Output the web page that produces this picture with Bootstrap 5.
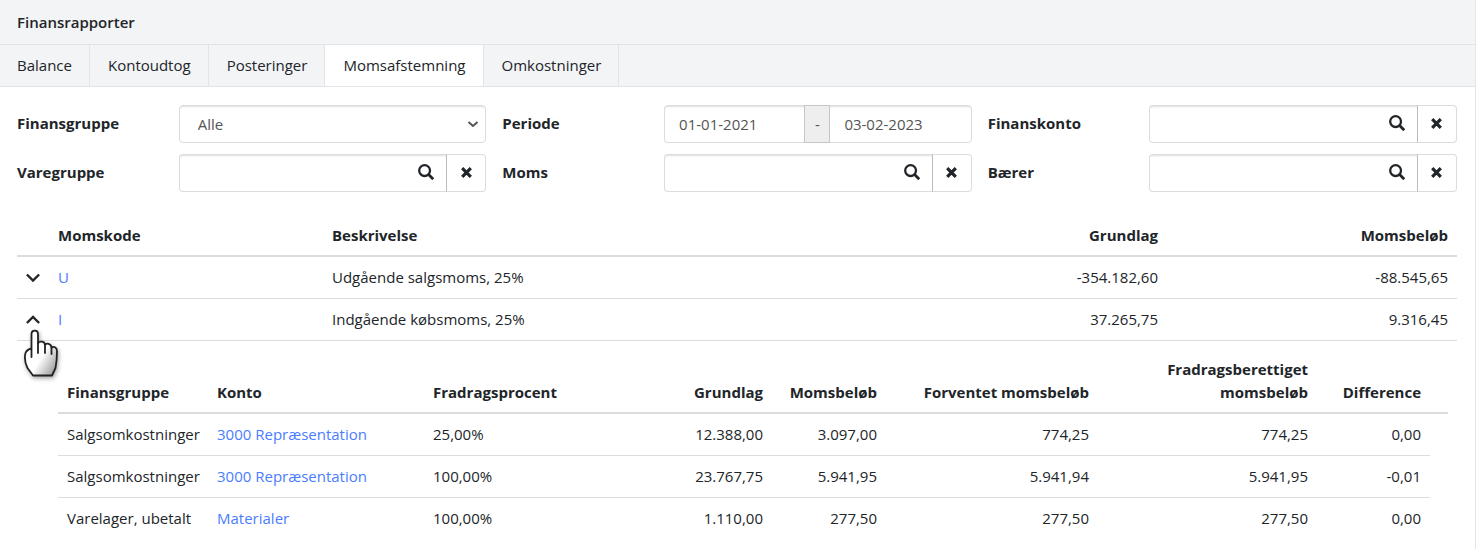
<!DOCTYPE html>
<html lang="da">
<head>
<meta charset="utf-8">
<meta name="viewport" content="width=device-width, initial-scale=1">
<title>Finansrapporter</title>
<link href="https://cdn.jsdelivr.net/npm/bootstrap@5.3.0/dist/css/bootstrap.min.css" rel="stylesheet">
<style>
  :root { --line: #dcdcdf; --bar: #f3f4f6; --bar-line: #e3e4e9; --ink: #212529; --muted: #555; --accent: #4a7dff; }
  body { font-family: "Open Sans", "Noto Sans", sans-serif; font-size: 15px; line-height: 23px; color: var(--ink); }
  .report { border-right: 1px solid var(--bar-line); margin-right: 1px; min-height: 100vh; }
  .report-head { background: var(--bar); border-bottom: 1px solid var(--bar-line); padding: 11px 17px; }
  .report-head h1 { font-size: 15px; line-height: 22px; font-weight: 600; }
  .report-tabs { background: var(--bar); border-bottom: 1px solid var(--bar-line); }
  .report-tabs .nav-link { color: var(--ink); padding: 9px 17px 9px 18px; border-right: 1px solid var(--bar-line); }
  .report-tabs .nav-item:first-child .nav-link { padding-left: 17px; }
  .report-tabs .nav-link.active { background: #fff; }
  .report-body { padding: 18px 18px 0 17px; }
  .filters { margin-bottom: 23px; }
  .filters > .row { row-gap: 11px; }
  .filters .col-form-label { font-weight: 700; padding-top: 7px; padding-bottom: 7px; }
  .filters .form-control, .filters .form-select, .filters .btn, .filters .input-group-text {
    font-size: 15px; line-height: 24px; height: 38px; border-color: var(--line); border-radius: 4px; color: var(--muted); }
  .filters .form-control, .filters .form-select, .filters .btn-find { box-shadow: inset 0 3px 2px -2px rgba(0,0,0,.13); }
  .filters .form-control { padding-left: 14px; }
  .filters .form-select { padding-left: 18px; background-size: 14px 14px; background-position: right 5px center;
    background-image: url("data:image/svg+xml,%3csvg xmlns='http://www.w3.org/2000/svg' viewBox='0 0 14 14'%3e%3cpath d='M2.5 5l4.5 4 4.5-4' fill='none' stroke='%23555' stroke-width='2'/%3e%3c/svg%3e"); }
  .filters .btn { background-color: #fff; color: var(--ink); display: flex; align-items: center; justify-content: center; padding: 0; width: 40px; }
  .filters .input-group > :not(:last-child) { border-top-right-radius: 0; border-bottom-right-radius: 0; }
  .filters .input-group > :not(:first-child) { border-top-left-radius: 0; border-bottom-left-radius: 0; }
  .filters .btn-find { border-left: 0; border-right: 0; padding: 0 2px 2px 0; }
  .filters .btn-wipe { border-left-color: #bbb; padding-bottom: 2px; }
  .filters .input-group-text { background: #eee; border-color: #c6c6c8; padding: 0; width: 26px; justify-content: center; position: relative; z-index: 2; }
  .filters .period-from { border-right: 0; }
  .grid-table { table-layout: fixed; margin: 0; --bs-table-color: var(--ink); color: var(--ink); border-color: var(--line); }
  .grid-table > thead > tr > th { border-bottom: 2px solid var(--line); padding: 9px 9px 8px; vertical-align: bottom; font-weight: 700; }
  .grid-table > tbody > tr > td { padding: 9px; }
  .grid-table a { color: var(--accent); text-decoration: none; }
  .outer > tbody > tr > td.detail { padding: 8px 9px 0; border-bottom: 0; }
  .inner > tbody > tr:last-child > td { border-bottom: 0; }
  .c-toggle { width: 32px; } .c-code { width: 274px; } .c-amount { width: 290px; }
  .c-group { width: 150px; } .c-account { width: 216px; } .c-vat { width: 114px; }
  .c-expected { width: 212px; } .c-deduct { width: 219px; } .c-diff { width: 113px; } .c-end { width: 18px; }
  .toggle { display: block; border: 0; background: none; padding: 0; color: var(--ink); line-height: 16px; }
  .toggle svg, .filters svg { display: block; }
  .pointer { position: absolute; left: 3px; top: 28px; z-index: 2; pointer-events: none; filter: drop-shadow(1px 2px 2px rgba(0,0,0,.35)); }
</style>
</head>
<body>
<svg width="0" height="0" class="position-absolute" aria-hidden="true">
  <symbol id="i-find" viewBox="0 0 16 16"><circle cx="6.600" cy="6.600" r="5.400" fill="none" stroke="currentColor" stroke-width="2.300"/><path d="M10.600 10.600L15.200 15.200" stroke="currentColor" stroke-width="2.800" fill="none"/></symbol>
  <symbol id="i-wipe" viewBox="0 0 11 16"><path d="M1.200 4.200L9.800 12.800M9.800 4.200L1.200 12.800" stroke="currentColor" stroke-width="3.200" fill="none"/></symbol>
  <symbol id="i-down" viewBox="0 0 14 16"><path d="M.9 4.500L7 10.500L13.100 4.500" stroke="currentColor" stroke-width="2.400" fill="none"/></symbol>
  <symbol id="i-up" viewBox="0 0 14 16"><path d="M.9 11L7 5L13.100 11" stroke="currentColor" stroke-width="2.400" fill="none"/></symbol>
</svg>
<main class="report">
  <header class="report-head"><h1 class="m-0">Finansrapporter</h1></header>
  <nav class="report-tabs" aria-label="Rapporter">
    <ul class="nav">
      <li class="nav-item"><a class="nav-link" href="#">Balance</a></li>
      <li class="nav-item"><a class="nav-link" href="#">Kontoudtog</a></li>
      <li class="nav-item"><a class="nav-link" href="#">Posteringer</a></li>
      <li class="nav-item"><a class="nav-link active" aria-current="page" href="#">Momsafstemning</a></li>
      <li class="nav-item"><a class="nav-link" href="#">Omkostninger</a></li>
    </ul>
  </nav>
  <div class="report-body">
    <form class="filters">
      <div class="row gx-3">
        <div class="col-4"><div class="row gx-3">
          <label class="col-4 col-form-label" for="f-group">Finansgruppe</label>
          <div class="col-8"><select class="form-select" id="f-group"><option>Alle</option></select></div>
        </div></div>
        <div class="col-4"><div class="row gx-3">
          <label class="col-4 col-form-label" for="f-from">Periode</label>
          <div class="col-8"><div class="input-group flex-nowrap">
            <input class="form-control period-from" id="f-from" type="text" value="01-01-2021">
            <span class="input-group-text">-</span>
            <input class="form-control" type="text" value="03-02-2023" aria-label="Periode til">
          </div></div>
        </div></div>
        <div class="col-4"><div class="row gx-3">
          <label class="col-4 col-form-label" for="f-account">Finanskonto</label>
          <div class="col-8"><div class="input-group flex-nowrap">
            <input class="form-control border-end-0" id="f-account" type="text">
            <button class="btn btn-find" type="button" aria-label="Søg"><svg width="16" height="16"><use href="#i-find"/></svg></button>
            <button class="btn btn-wipe" type="button" aria-label="Ryd"><svg width="11" height="16"><use href="#i-wipe"/></svg></button>
          </div></div>
        </div></div>
        <div class="col-4"><div class="row gx-3">
          <label class="col-4 col-form-label" for="f-item">Varegruppe</label>
          <div class="col-8"><div class="input-group flex-nowrap">
            <input class="form-control border-end-0" id="f-item" type="text">
            <button class="btn btn-find" type="button" aria-label="Søg"><svg width="16" height="16"><use href="#i-find"/></svg></button>
            <button class="btn btn-wipe" type="button" aria-label="Ryd"><svg width="11" height="16"><use href="#i-wipe"/></svg></button>
          </div></div>
        </div></div>
        <div class="col-4"><div class="row gx-3">
          <label class="col-4 col-form-label" for="f-vat">Moms</label>
          <div class="col-8"><div class="input-group flex-nowrap">
            <input class="form-control border-end-0" id="f-vat" type="text">
            <button class="btn btn-find" type="button" aria-label="Søg"><svg width="16" height="16"><use href="#i-find"/></svg></button>
            <button class="btn btn-wipe" type="button" aria-label="Ryd"><svg width="11" height="16"><use href="#i-wipe"/></svg></button>
          </div></div>
        </div></div>
        <div class="col-4"><div class="row gx-3">
          <label class="col-4 col-form-label" for="f-carrier">Bærer</label>
          <div class="col-8"><div class="input-group flex-nowrap">
            <input class="form-control border-end-0" id="f-carrier" type="text">
            <button class="btn btn-find" type="button" aria-label="Søg"><svg width="16" height="16"><use href="#i-find"/></svg></button>
            <button class="btn btn-wipe" type="button" aria-label="Ryd"><svg width="11" height="16"><use href="#i-wipe"/></svg></button>
          </div></div>
        </div></div>
      </div>
    </form>
    <table class="table grid-table outer">
      <colgroup><col class="c-toggle"><col class="c-code"><col><col><col class="c-amount"></colgroup>
      <thead><tr><th></th><th scope="col">Momskode</th><th scope="col">Beskrivelse</th><th scope="col" class="text-end">Grundlag</th><th scope="col" class="text-end">Momsbeløb</th></tr></thead>
      <tbody>
        <tr>
          <td class="align-middle"><button class="toggle" type="button" aria-label="Vis detaljer"><svg width="14" height="16"><use href="#i-down"/></svg></button></td>
          <td><a href="#">U</a></td><td>Udgående salgsmoms, 25%</td><td class="text-end">-354.182,60</td><td class="text-end">-88.545,65</td>
        </tr>
        <tr>
          <td class="align-middle position-relative"><button class="toggle" type="button" aria-label="Skjul detaljer" aria-expanded="true"><svg width="14" height="16"><use href="#i-up"/></svg></button>
            <svg class="pointer" width="40" height="54" viewBox="0 0 40 54" aria-hidden="true">
              <defs><linearGradient id="skin" x1="0.2" y1="0.3" x2="1" y2="1"><stop offset=".4" stop-color="#fff"/><stop offset="1" stop-color="#888"/></linearGradient></defs>
              <path d="M11.500 30V7c0-4.500 6.500-4.500 6.500 0v9.500c1-3 7-2.500 7 1.500 1.500-2.500 6-1.500 6.500 2.500 2-1.500 5.500-.5 5.500 3.500 0 7-.5 12-1.500 17L32 48.500H13L7.500 41C5 36 4.500 30 5.500 26c1-2.500 3.500-4 6-4.500" fill="url(#skin)" stroke="#222" stroke-width="1.800" stroke-linejoin="round" stroke-linecap="round"/>
              <path d="M18 16v10M25 18v8M31.500 20.500V27" fill="none" stroke="#222" stroke-width="1.800" stroke-linecap="round"/>
            </svg></td>
          <td><a href="#">I</a></td><td>Indgående købsmoms, 25%</td><td class="text-end">37.265,75</td><td class="text-end">9.316,45</td>
        </tr>
        <tr>
          <td class="border-0 p-0"></td>
          <td class="detail" colspan="4">
            <table class="table grid-table inner">
              <colgroup><col class="c-group"><col class="c-account"><col><col><col class="c-vat"><col class="c-expected"><col class="c-deduct"><col class="c-diff"><col class="c-end"></colgroup>
              <thead><tr><th scope="col">Finansgruppe</th><th scope="col">Konto</th><th scope="col">Fradragsprocent</th><th scope="col" class="text-end">Grundlag</th><th scope="col" class="text-end">Momsbeløb</th><th scope="col" class="text-end">Forventet momsbeløb</th><th scope="col" class="text-end">Fradragsberettiget momsbeløb</th><th scope="col" class="text-end">Difference</th><th class="p-0"></th></tr></thead>
              <tbody>
                <tr><td class="text-nowrap">Salgsomkostninger</td><td><a href="#">3000 Repræsentation</a></td><td>25,00%</td><td class="text-end">12.388,00</td><td class="text-end">3.097,00</td><td class="text-end">774,25</td><td class="text-end">774,25</td><td class="text-end">0,00</td></tr>
                <tr><td class="text-nowrap">Salgsomkostninger</td><td><a href="#">3000 Repræsentation</a></td><td>100,00%</td><td class="text-end">23.767,75</td><td class="text-end">5.941,95</td><td class="text-end">5.941,94</td><td class="text-end">5.941,95</td><td class="text-end">-0,01</td></tr>
                <tr><td class="text-nowrap">Varelager, ubetalt</td><td><a href="#">Materialer</a></td><td>100,00%</td><td class="text-end">1.110,00</td><td class="text-end">277,50</td><td class="text-end">277,50</td><td class="text-end">277,50</td><td class="text-end">0,00</td></tr>
              </tbody>
            </table>
          </td>
        </tr>
      </tbody>
    </table>
  </div>
</main>
<script src="https://cdn.jsdelivr.net/npm/bootstrap@5.3.0/dist/js/bootstrap.bundle.min.js"></script>
</body>
</html>
